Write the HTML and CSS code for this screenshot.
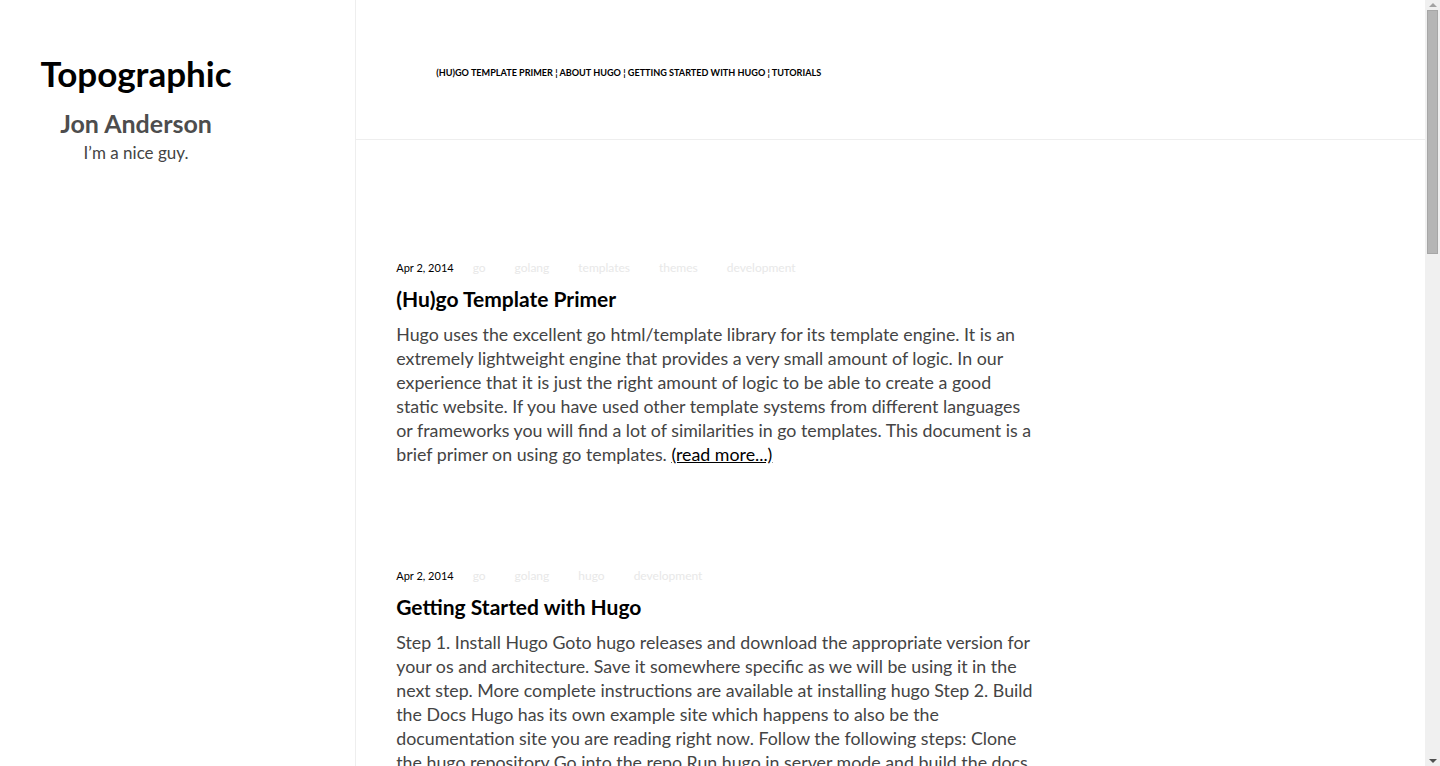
FILE: index.html
```html
<!DOCTYPE html>
<html lang="en">
<head>
<meta charset="utf-8">
<title>Topographic</title>
<link rel="stylesheet" href="styles.css">
</head>
<body>
<div class="page">
  <aside class="sidebar">
    <div class="brand">
      <h1 class="site-title">Topographic</h1>
      <h2 class="author">Jon Anderson</h2>
      <p class="tagline">I’m a nice guy.</p>
    </div>
  </aside>
  <main class="main">
    <header class="header">
      <nav class="nav">
        <a href="#">(Hu)go Template Primer</a> ¦ <a href="#">About Hugo</a> ¦ <a href="#">Getting Started with Hugo</a> ¦ <a href="#">Tutorials</a>
      </nav>
    </header>
    <section class="posts">
      <article class="post">
        <div class="meta"><span class="date">Apr 2, 2014</span><a class="tag" href="#">go</a><a class="tag" href="#">golang</a><a class="tag" href="#">templates</a><a class="tag" href="#">themes</a><a class="tag" href="#">development</a></div>
        <h3 class="post-title"><a href="#">(Hu)go Template Primer</a></h3>
        <p class="summary">Hugo uses the excellent go html/template library for its template engine. It is an extremely lightweight engine that provides a very small amount of logic. In our experience that it is just the right amount of logic to be able to create a good static website. If you have used other template systems from different languages or frameworks you will find a lot of similarities in go templates. This document is a brief primer on using go templates. <a class="more" href="#">(read more...)</a></p>
      </article>
      <article class="post">
        <div class="meta"><span class="date">Apr 2, 2014</span><a class="tag" href="#">go</a><a class="tag" href="#">golang</a><a class="tag" href="#">hugo</a><a class="tag" href="#">development</a></div>
        <h3 class="post-title"><a href="#">Getting Started with Hugo</a></h3>
        <p class="summary">Step 1. Install Hugo Goto hugo releases and download the appropriate version for your os and architecture. Save it somewhere specific as we will be using it in the next step. More complete instructions are available at installing hugo Step 2. Build the Docs Hugo has its own example site which happens to also be the documentation site you are reading right now. Follow the following steps: Clone the hugo repository Go into the repo Run hugo in server mode and build the docs Open your browser to http://localhost:1313 Corresponding pseudo commands: <a class="more" href="#">(read more...)</a></p>
      </article>
      <article class="post">
        <div class="meta"><span class="date">Apr 2, 2014</span><a class="tag" href="#">hugo</a><a class="tag" href="#">development</a></div>
        <h3 class="post-title"><a href="#">About Hugo</a></h3>
        <p class="summary">Hugo is a static site engine written in Go. It makes use of a variety of open source projects including Cobra, Viper, Blackfriday and more. Hugo is designed to be fast, easy to use and highly configurable. It takes a directory with content and templates and renders them into a full html website. <a class="more" href="#">(read more...)</a></p>
      </article>
      <article class="post">
        <div class="meta"><span class="date">Apr 2, 2014</span><a class="tag" href="#">hugo</a><a class="tag" href="#">tutorials</a></div>
        <h3 class="post-title"><a href="#">Tutorials</a></h3>
        <p class="summary">A collection of tutorials that walk through building a site with Hugo, from creating your first theme to migrating an existing blog and deploying the result to a static host. <a class="more" href="#">(read more...)</a></p>
      </article>
    </section>
  </main>
</div>
<div class="scrollbar" aria-hidden="true">
  <span class="arrow arrow-up"></span>
  <span class="thumb"></span>
  <span class="track-rest"></span>
  <span class="arrow arrow-down"></span>
</div>
</body>
</html>
```
FILE: styles.css
```css
html, body {
  margin: 0;
  padding: 0;
  background: #fff;
}
body {
  font-family: Lato, "Noto Sans", sans-serif;
  color: #444;
}
a {
  color: inherit;
  text-decoration: none;
}
.page {
  display: flex;
  width: calc(100% - 15px);
  min-height: 2310px;
}
.sidebar {
  width: 25%;
  flex: none;
  border-right: 1px solid #eee;
  box-sizing: border-box;
}
.brand {
  width: 272px;
  text-align: center;
  padding-top: 51px;
}
.site-title {
  margin: 0;
  font-size: 35px;
  font-weight: 700;
  color: #000;
  line-height: 44px;
}
.author {
  margin: 12px 0 0;
  font-size: 25px;
  font-weight: 700;
  color: #4d4d4d;
  line-height: 32px;
}
.tagline {
  margin: 3px 0 0;
  font-size: 17px;
  color: #444;
  line-height: 22px;
}
.main {
  flex: 1;
  min-width: 0;
}
.header {
  height: 139px;
  border-bottom: 1px solid #eee;
  display: flex;
  align-items: center;
  padding-left: 80px;
}
.nav {
  font-size: 9.1px;
  font-weight: 700;
  text-transform: uppercase;
  color: #000;
  margin-top: 5px;
}
.posts {
  padding: 120px 40px 0;
}
.post {
  width: 640px;
  height: 308px;
}
.meta {
  display: flex;
  align-items: baseline;
  line-height: 16px;
}
.date {
  font-size: 11px;
  color: #000;
  margin-right: 19px;
}
.tag {
  font-size: 12px;
  color: #e8e8e8;
  margin-right: 29px;
}
.post-title {
  margin: 8px 0 0;
  font-size: 21px;
  font-weight: 700;
  color: #000;
  line-height: 30px;
}
.summary {
  margin: 8px 0 0;
  font-size: 17.8px;
  line-height: 24px;
  color: #444;
}
.more {
  color: #000;
  text-decoration: underline;
}

/* classic window scrollbar, drawn over the right edge */
.scrollbar {
  position: fixed;
  top: 0;
  right: 0;
  width: 15px;
  height: 100vh;
  background: #f0f0f0;
  display: flex;
  flex-direction: column;
  align-items: center;
}
.arrow {
  flex: none;
  width: 0;
  height: 0;
  border-left: 4px solid transparent;
  border-right: 4px solid transparent;
}
.arrow-up {
  margin-top: 3px;
  border-bottom: 4px solid #a3a3a3;
}
.arrow-down {
  margin-bottom: 3px;
  border-top: 4px solid #505050;
}
.thumb {
  flex: none;
  margin-top: 3px;
  width: 9px;
  height: 242px;
  background: #b5b5b5;
  border: 1px solid #a6a6a6;
}
.track-rest {
  flex: 1;
}
```
